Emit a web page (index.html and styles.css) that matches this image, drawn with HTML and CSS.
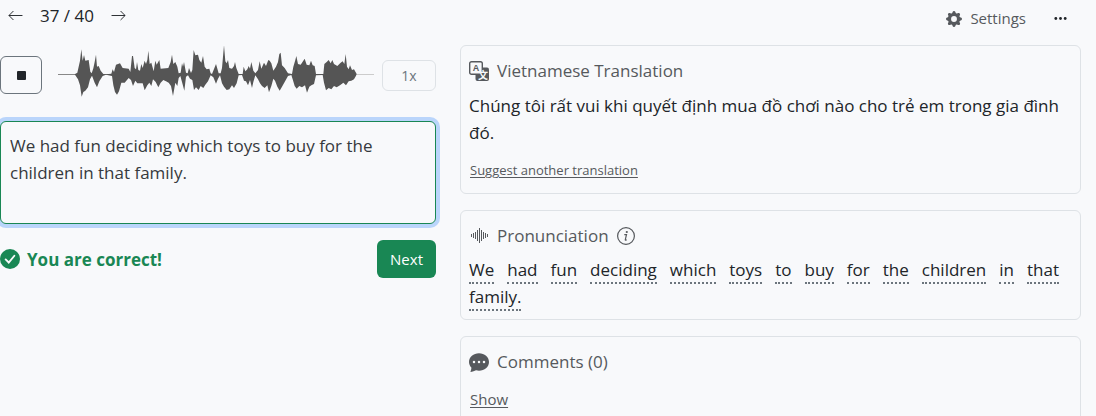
FILE: index.html
```html
<!DOCTYPE html>
<html lang="en">
<head>
<meta charset="utf-8">
<meta name="viewport" content="width=device-width, initial-scale=1">
<title>Dictation</title>
<link rel="stylesheet" href="styles.css">
</head>
<body>
<main class="page">
  <section class="practice">
    <nav class="pager" aria-label="Sentences">
      <button class="plain" type="button" aria-label="Previous"><svg class="arrow" viewBox="0 0 16 16"><path d="M15 8H1.5M5.500 3.500 1 8l4.500 4.500"/></svg></button>
      <span class="count">37 / 40</span>
      <button class="plain" type="button" aria-label="Next sentence"><svg class="arrow" viewBox="0 0 16 16"><path d="M1 8h13.500M10.500 3.500 15 8l-4.500 4.500"/></svg></button>
    </nav>
    <div class="player">
      <button class="stop" type="button" aria-label="Stop"><span class="square"></span></button>
      <svg class="wave" viewBox="24 0 948 192" preserveAspectRatio="none" aria-hidden="true">
        <path class="axis" d="M24 103.500H916"/><path class="axis rest" d="M916 103.500H972"/>
        <path d="M74 103 82 98 86 80 90 62 94 28 98 62 102 45 106 62 116 60 121 95 125 100 130 85 134 66 138 44 141 80 146 78 152 92 160 102 168 103 184 101 188 88 192 96 198 74 210 70 218 84 236 86 241 96 246 48 249 48 254 84 258 88 261 66 265 90 270 92 274 72 278 84 284 62 288 72 292 60 295 32 299 72 304 68 311 94 316 62 320 74 328 60 332 86 355 84 362 66 366 44 370 72 376 66 382 80 386 100 392 98 396 70 399 80 402 66 408 98 413 100 417 84 423 99 427 90 431 30 436 46 444 44 448 60 454 68 459 48 464 80 470 88 478 86 482 100 486 102 498 72 506 100 512 100 516 84 522 16 526 64 530 70 534 60 538 84 546 86 552 78 555 66 559 84 566 102 578 102 581 80 586 94 592 88 596 78 600 86 604 66 610 92 616 100 624 90 629 64 634 86 642 68 648 78 655 60 659 62 664 70 670 92 678 80 684 66 688 42 692 38 696 76 704 84 714 100 726 102 730 80 736 60 739 48 744 72 752 74 764 56 770 74 778 76 783 62 788 76 794 78 798 102 820 102 823 72 830 66 836 60 842 70 847 60 852 72 862 78 872 68 878 64 883 72 887 42 891 80 896 88 900 76 906 90 912 88 920 102
        918 107 912 118 904 122 896 124 888 136 880 128 870 136 860 142 852 138 844 148 836 144 828 151 822 128 818 105 798 106 792 132 784 136 778 140 771 158 765 136 756 142 748 138 740 146 734 138 728 118 724 105 714 108 704 126 696 140 689 152 682 140 675 122 670 116 664 138 657 157 652 136 644 144 636 138 630 130 624 118 616 106 610 126 606 144 600 120 594 136 588 124 582 122 576 105 566 106 560 130 552 144 546 136 538 148 530 150 522 140 516 130 510 106 504 116 498 131 490 112 482 106 474 124 466 134 460 144 452 138 446 150 438 142 432 150 427 120 420 116 414 106 408 110 403 152 396 126 391 108 386 114 382 138 376 128 369 168 363 138 356 128 348 124 340 120 332 128 325 142 317 126 309 118 304 138 298 128 292 136 284 151 278 130 270 130 262 130 256 122 249 138 243 120 236 114 224 128 214 128 207 154 201 164 195 156 190 136 186 108 168 104 158 108 148 124 141 142 134 128 126 107 120 118 114 142 106 152 100 156 95 170 90 136 84 118Z"/>
      </svg>
      <button class="speed" type="button">1x</button>
    </div>
    <textarea class="answer" aria-label="Your answer" spellcheck="false">We had fun deciding which toys to buy for the children in that family.</textarea>
    <div class="result">
      <svg class="icon check" viewBox="0 0 16 16" aria-hidden="true"><circle cx="8" cy="8" r="8"/><path d="m4.500 8.300 2.500 2.500 4.500-5.400"/></svg>
      <strong class="verdict">You are correct!</strong>
      <button class="next" type="button">Next</button>
    </div>
  </section>

  <section class="details">
    <div class="toolbar">
      <button class="plain settings" type="button"><svg class="gear" viewBox="0 0 16 16" aria-hidden="true"><path d="M9.405 1.050c-.413-1.400-2.397-1.400-2.810 0l-.100.340a1.464 1.464 0 0 1-2.105.872l-.310-.170c-1.283-.698-2.686.705-1.987 1.987l.169.311c.446.820.023 1.841-.872 2.105l-.340.100c-1.400.413-1.400 2.397 0 2.810l.340.100a1.464 1.464 0 0 1 .872 2.105l-.170.310c-.698 1.283.705 2.686 1.987 1.987l.311-.169a1.464 1.464 0 0 1 2.105.872l.100.340c.413 1.400 2.397 1.400 2.810 0l.100-.340a1.464 1.464 0 0 1 2.105-.872l.310.170c1.283.698 2.686-.705 1.987-1.987l-.169-.311a1.464 1.464 0 0 1 .872-2.105l.340-.100c1.400-.413 1.400-2.397 0-2.810l-.340-.100a1.464 1.464 0 0 1-.872-2.105l.170-.310c.698-1.283-.705-2.686-1.987-1.987l-.311.169a1.464 1.464 0 0 1-2.105-.872zM8 10.930a2.929 2.929 0 1 1 0-5.860 2.929 2.929 0 0 1 0 5.858z"/></svg>Settings</button>
      <button class="plain" type="button" aria-label="More"><svg class="dots" viewBox="0 0 16 16"><circle cx="3" cy="8" r="1.500"/><circle cx="8" cy="8" r="1.500"/><circle cx="13" cy="8" r="1.500"/></svg></button>
    </div>

    <article class="card">
      <h2 class="title"><svg class="icon" viewBox="0 0 20 20" aria-hidden="true"><rect x="6.500" y="6.500" width="13.500" height="13.500" rx="2"/><rect class="sheet" x="0.700" y="0.700" width="12.600" height="12.600" rx="1.800"/><text class="latin" x="7" y="10.200" text-anchor="middle">A</text><text class="han" x="13.900" y="18" text-anchor="middle">文</text></svg>Vietnamese Translation</h2>
      <p class="text">Chúng tôi rất vui khi quyết định mua đồ chơi nào cho trẻ em trong gia đình đó.</p>
      <a class="link small" href="#suggest">Suggest another translation</a>
    </article>

    <article class="card words-card">
      <h2 class="title"><svg class="icon sound" viewBox="0 0 20 20" aria-hidden="true"><path d="M2.500 8v3M4.500 7v5M6.500 6v7M8.500 4v11M10.500 2v15M12.500 4v11M14.500 6v7M16.500 7v5M18.500 8v3"/></svg>Pronunciation<button class="plain" type="button" aria-label="About pronunciation"><svg class="info" viewBox="0 0 18 18"><circle cx="9" cy="9" r="8.400"/><circle class="dot" cx="9.800" cy="5" r="1.100"/><path d="M7.300 7.600h2.200L8.300 12.500q-.2 1.200 1.500.3"/></svg></button></h2>
      <div class="words"><span>We</span> <span>had</span> <span>fun</span> <span>deciding</span> <span>which</span> <span>toys</span> <span>to</span> <span>buy</span> <span>for</span> <span>the</span> <span>children</span> <span>in</span> <span>that</span> <span>family.</span></div>
    </article>

    <article class="card">
      <h2 class="title"><svg class="icon" viewBox="0 0 16 16" aria-hidden="true"><path d="M16 8c0 3.866-3.582 7-8 7a9 9 0 0 1-2.347-.306c-.584.296-1.925.864-4.181 1.234-.200.032-.352-.176-.273-.362.354-.836.674-1.950.770-2.966C.744 11.370 0 9.760 0 8c0-3.866 3.582-7 8-7s8 3.134 8 7M5 8a1 1 0 1 0-2 0 1 1 0 0 0 2 0m4 0a1 1 0 1 0-2 0 1 1 0 0 0 2 0m3 1a1 1 0 1 0 0-2 1 1 0 0 0 0 2"/></svg>Comments (0)</h2>
      <a class="link" href="#comments">Show</a>
    </article>
  </section>
</main>
</body>
</html>
```
FILE: styles.css
```css
* { box-sizing: border-box; }
html { scrollbar-width: none; }
body {
  margin: 0;
  background: #f8f9fb;
  color: #212529;
  font: 17px/27px "Open Sans", "Noto Sans", sans-serif;
}
button { font: inherit; color: inherit; cursor: pointer; }
svg { display: block; flex: none; fill: currentColor; }
.page {
  display: grid;
  grid-template-columns: minmax(0, 436fr) minmax(0, 621fr);
  gap: 24px;
  padding-right: 15px;
}
.plain { display: flex; align-items: center; padding: 0; border: 0; background: none; }

.pager { display: flex; align-items: center; gap: 17px; padding: 2px 0 0 8px; height: 29px; }
.arrow { width: 15px; height: 15px; fill: none; stroke: currentColor; stroke-width: 1; stroke-linecap: round; stroke-linejoin: round; }
.player { display: flex; align-items: center; margin-top: 14px; height: 64px; }
.stop {
  display: grid;
  place-items: center;
  width: 42px;
  height: 38px;
  border: 1px solid #6c757d;
  border-radius: 6px;
  background: none;
}
.square { width: 9px; height: 9px; border-radius: 1px; background: #212529; }
.wave { flex: 1; min-width: 0; height: 64px; margin: 0 8px 6px 16px; fill: #555; }
.axis { stroke: #888; stroke-width: 3; }
.rest { stroke: #ccc; }
.speed {
  width: 54px;
  height: 31px;
  padding: 0;
  border: 1px solid #dee2e6;
  border-radius: 6px;
  background: none;
  color: #6c757d;
  font-size: 14px;
}
.answer {
  display: block;
  width: 100%;
  height: 103px;
  margin-top: 14px;
  padding: 10px 9px;
  border: 1px solid #198754;
  border-radius: 6px;
  outline: 0;
  box-shadow: 0 0 0 4px #bad5fb;
  background: #f8f9fb;
  color: #36393d;
  font: inherit;
  resize: none;
}
.result { display: flex; align-items: center; gap: 7px; margin-top: 16px; color: #198754; }
.check path { fill: none; stroke: #f8f9fb; stroke-width: 1.5; stroke-linecap: round; }
.next {
  margin-left: auto;
  height: 38px;
  padding: 0 13px;
  border: 0;
  border-radius: 6px;
  background: #198754;
  color: #fff;
  font-size: 15px;
}

.toolbar { display: flex; justify-content: flex-end; align-items: center; gap: 27px; height: 45px; padding: 0 13px 8px 0; }
.settings { gap: 8px; color: #56595d; font-size: 15px; }
.gear { width: 16px; height: 16px; }
.dots { width: 15px; height: 15px; }
.card { margin-bottom: 16px; padding: 11px 8px; border: 1px solid #dee2e6; border-radius: 6px; }
.title { display: flex; align-items: center; gap: 8px; margin: 0 0 8px; color: #56595d; font: inherit; }
.icon { width: 20px; height: 20px; }
.sheet { fill: #f8f9fb; stroke: currentColor; stroke-width: 1.4; }
.latin { font: bold 9px "Liberation Sans", sans-serif; }
.han { fill: #f8f9fb; font: bold 10px "Noto Sans CJK SC", sans-serif; }
.sound { fill: none; stroke: currentColor; stroke-width: 1; }
.info { width: 18px; height: 18px; fill: none; stroke: currentColor; stroke-width: 1.2; }
.dot { fill: currentColor; stroke: none; }
.text { margin: 0 0 12px; }
.link { display: block; width: fit-content; margin: 12px 1px 0; color: #56595d; font-size: 15px; line-height: 24px; text-underline-offset: 2px; }
.small { font-size: 13px; }
.words-card { padding-bottom: 8px; }
.words { display: flex; flex-wrap: wrap; column-gap: 13px; }
.words span { border-bottom: 2px dotted #6c757d; line-height: 25px; }
```
